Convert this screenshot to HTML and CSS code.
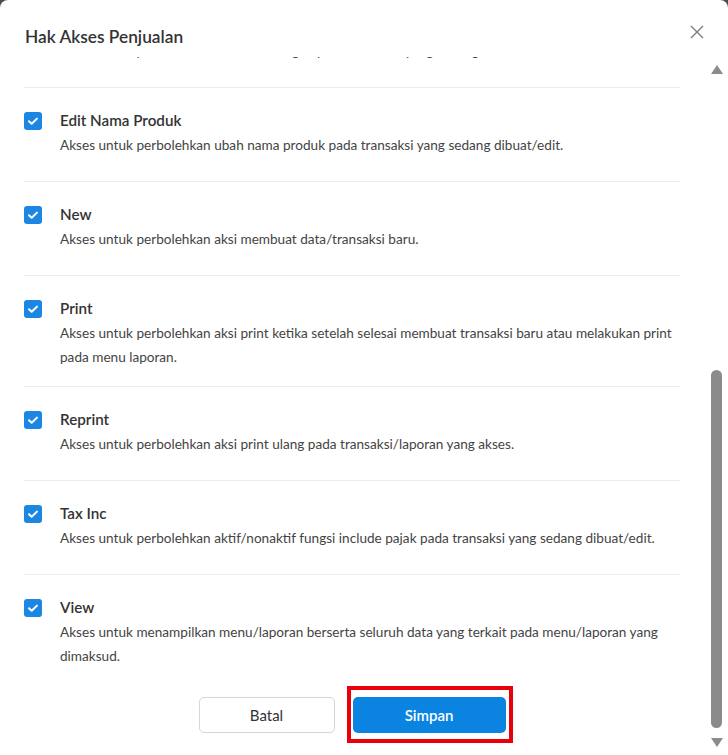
FILE: index.html
```html
<!DOCTYPE html>
<html lang="id">

<head>
    <meta charset="UTF-8" />
    <meta name="viewport" content="width=device-width, initial-scale=1.0" />
    <title>Hak Akses Penjualan</title>
    <link rel="stylesheet" href="styles.css">
</head>

<body>

    <div class="modal">
        <div class="modal-header">
            <h2 class="modal-title">Hak Akses Penjualan</h2>
            <button class="close" aria-label="Tutup">
                <svg width="14" height="14" viewBox="0 0 14 14">
                    <path d="M1 1L13 13M13 1L1 13" stroke="#7a7a7a" stroke-width="1.3" fill="none" />
                </svg>
            </button>
        </div>

        <div class="modal-body">
            <div class="body-inner">
                <ul class="access-list">
                    <li class="access-item">
                        <span class="check"><svg viewBox="0 0 18 18"><path d="M5 9.2l2.7 2.6L13 6.6" /></svg></span>
                        <div class="access-text">
                            <div class="access-name">Edit Keterangan</div>
                            <p class="access-desc">Akses untuk perbolehkan ubah keterangan pada transaksi yang sedang dibuat/edit.</p>
                        </div>
                    </li>
                    <li class="access-item">
                        <span class="check"><svg viewBox="0 0 18 18"><path d="M5 9.2l2.7 2.6L13 6.6" /></svg></span>
                        <div class="access-text">
                            <div class="access-name">Edit Nama Produk</div>
                            <p class="access-desc">Akses untuk perbolehkan ubah nama produk pada transaksi yang sedang dibuat/edit.</p>
                        </div>
                    </li>
                    <li class="access-item">
                        <span class="check"><svg viewBox="0 0 18 18"><path d="M5 9.2l2.7 2.6L13 6.6" /></svg></span>
                        <div class="access-text">
                            <div class="access-name">New</div>
                            <p class="access-desc">Akses untuk perbolehkan aksi membuat data/transaksi baru.</p>
                        </div>
                    </li>
                    <li class="access-item">
                        <span class="check"><svg viewBox="0 0 18 18"><path d="M5 9.2l2.7 2.6L13 6.6" /></svg></span>
                        <div class="access-text">
                            <div class="access-name">Print</div>
                            <p class="access-desc">Akses untuk perbolehkan aksi print ketika setelah selesai membuat transaksi baru atau melakukan print pada menu laporan.</p>
                        </div>
                    </li>
                    <li class="access-item">
                        <span class="check"><svg viewBox="0 0 18 18"><path d="M5 9.2l2.7 2.6L13 6.6" /></svg></span>
                        <div class="access-text">
                            <div class="access-name">Reprint</div>
                            <p class="access-desc">Akses untuk perbolehkan aksi print ulang pada transaksi/laporan yang akses.</p>
                        </div>
                    </li>
                    <li class="access-item">
                        <span class="check"><svg viewBox="0 0 18 18"><path d="M5 9.2l2.7 2.6L13 6.6" /></svg></span>
                        <div class="access-text">
                            <div class="access-name">Tax Inc</div>
                            <p class="access-desc">Akses untuk perbolehkan aktif/nonaktif fungsi include pajak pada transaksi yang sedang dibuat/edit.</p>
                        </div>
                    </li>
                    <li class="access-item">
                        <span class="check"><svg viewBox="0 0 18 18"><path d="M5 9.2l2.7 2.6L13 6.6" /></svg></span>
                        <div class="access-text">
                            <div class="access-name">View</div>
                            <p class="access-desc">Akses untuk menampilkan menu/laporan berserta seluruh data yang terkait pada menu/laporan yang dimaksud.</p>
                        </div>
                    </li>
                </ul>

                <div class="modal-footer">
                    <button class="btn btn-cancel">Batal</button>
                    <button class="btn btn-save">Simpan</button>
                </div>
            </div>
        </div>

        <!-- scrollbar drawn by hand, the browser hides the native one -->
        <div class="scrollbar">
            <span class="sb-arrow sb-up"></span>
            <span class="sb-thumb"></span>
            <span class="sb-arrow sb-down"></span>
        </div>
    </div>

</body>

</html>
```

FILE: styles.css
```css
body {
    margin: 0;
    padding: 0;
    background-color: #4a4a4a;
    font-family: Lato, "Noto Sans", sans-serif;
    color: #333;
}

.modal {
    position: relative;
    background: #fff;
    height: 755px;
    border-radius: 8px 8px 0 0;
    display: flex;
    flex-direction: column;
    overflow: hidden;
}

.modal-header {
    display: flex;
    justify-content: space-between;
    align-items: flex-start;
    padding: 26px 24px 9px 25px;
}

.modal-title {
    margin: 0;
    font-size: 17.3px;
    line-height: 22px;
    font-weight: 600;
    color: #333;
}

.close {
    border: none;
    background: none;
    padding: 0;
    margin-top: -1px;
    cursor: pointer;
    width: 14px;
    height: 14px;
}

/* list is scrolled to the bottom */
.modal-body {
    flex: 1;
    min-height: 0;
    overflow-y: hidden;
    display: flex;
    flex-direction: column-reverse;
    margin-right: 4px;
    margin-bottom: 3px;
}

.body-inner {
    padding: 0 44px 0 24px;
}

.access-list {
    list-style: none;
    margin: 0;
    padding: 0;
}

.access-item {
    display: flex;
    gap: 18px;
    padding: 20px 0 17px;
    border-bottom: 1px solid #ececec;
}

.access-item:last-child {
    border-bottom: none;
}

.check {
    flex: none;
    width: 18px;
    height: 18px;
    margin-top: 4px;
    border-radius: 3px;
    background: #1c86e3;
}

.check svg {
    display: block;
    width: 18px;
    height: 18px;
    fill: none;
    stroke: #fff;
    stroke-width: 2;
    stroke-linecap: round;
    stroke-linejoin: round;
}

.access-name {
    font-size: 15.2px;
    line-height: 25px;
    font-weight: 600;
    color: #333;
}

.access-desc {
    margin: 0;
    min-height: 31px;
    font-size: 13.6px;
    line-height: 24px;
    color: #444;
}

.modal-footer {
    display: flex;
    justify-content: center;
    gap: 18px;
    padding: 12px 0 19px;
}

.btn {
    height: 36px;
    font-family: inherit;
    font-size: 15px;
    border-radius: 5px;
    cursor: pointer;
}

.btn-cancel {
    width: 136px;
    background: #fff;
    color: #333;
    border: 1px solid #d6d6d6;
    font-weight: 400;
}

.btn-save {
    position: relative;
    width: 153px;
    background: #0a84e0;
    color: #fff;
    border: none;
    font-weight: 600;
}

.btn-save::after {
    content: "";
    position: absolute;
    top: -11px;
    right: -7px;
    bottom: -10px;
    left: -6px;
    border: 4px solid #e8000b;
}

.scrollbar {
    position: absolute;
    top: 57px;
    right: 4px;
    bottom: 2px;
    width: 15px;
    background: #fff;
}

.sb-arrow {
    position: absolute;
    left: 2px;
    width: 0;
    height: 0;
    border-left: 6px solid transparent;
    border-right: 6px solid transparent;
}

.sb-up {
    top: 8px;
    border-bottom: 9px solid #8b8b8b;
}

.sb-down {
    bottom: 6px;
    border-top: 9px solid #8b8b8b;
}

.sb-thumb {
    position: absolute;
    top: 313px;
    left: 2px;
    width: 11px;
    height: 358px;
    border-radius: 6px;
    background: #8b8b8b;
}
```
